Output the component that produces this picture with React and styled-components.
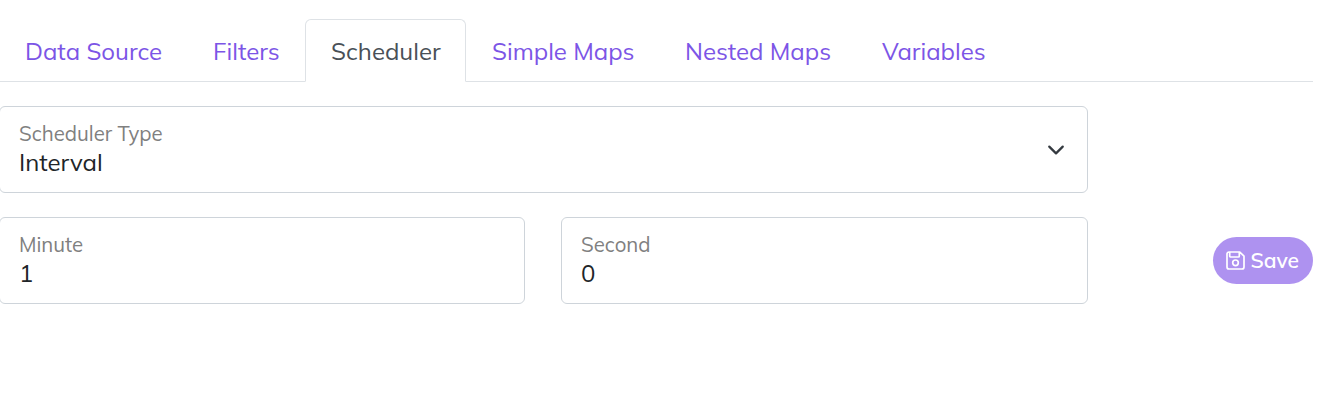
import React from "react";
import styled, { createGlobalStyle } from "styled-components";

const Global = createGlobalStyle`
  * { box-sizing: border-box; }
  body { margin: 0; background: #fff; overflow: hidden; font-family: Mulish, Muli, Lato, sans-serif; }
  button { font-family: inherit; }
`;
const Page = styled.main`
  width: 1313px;
  padding-top: 19px;
`;
const Tabs = styled.nav`
  display: flex;
  height: 63px;
  border-bottom: 1px solid #dee2e6;
`;
const Tab = styled.button`
  width: ${p => p.$w}px;
  height: 63px;
  padding: 0 0 0 25px;
  text-align: left;
  white-space: nowrap;
  font-size: 24px;
  font-weight: 400;
  line-height: 60px;
  color: ${p => (p.$active ? "#495057" : "#7c55e6")};
  background: ${p => (p.$active ? "#fff" : "transparent")};
  border: 1px solid ${p => (p.$active ? "#dee2e6" : "transparent")};
  border-bottom-color: ${p => (p.$active ? "#fff" : "transparent")};
  border-radius: 6px 6px 0 0;

  &:first-child { margin-left: -1px; }
`;
const Body = styled.section`
  display: flex;
  flex-direction: column;
  gap: 24px;
  padding-top: 24px;
`;
const Row = styled.div`
  display: flex;
  align-items: center;
`;
const Field = styled.div`
  display: flex;
  align-items: center;
  justify-content: space-between;
  width: ${p => p.$w}px;
  height: 87px;
  margin-left: ${p => p.$ml}px;
  padding: 0 22px 0 19px;
  border: 1px solid #ced4da;
  border-radius: 6px;
`;
const FieldText = styled.div`
  padding-bottom: 4px;
`;
const Caption = styled.div`
  font-size: 20.4px;
  line-height: 28px;
  color: #808080;
`;
const Value = styled.div`
  font-size: 24px;
  line-height: 30px;
  color: #212529;
`;
const Save = styled.button`
  display: flex;
  align-items: center;
  gap: 5.5px;
  width: 100px;
  height: 47px;
  margin-left: auto;
  padding: 0 0 0 13px;
  border: 0;
  border-radius: 24px;
  background: #ae92f0;
  color: #fff;
  font-size: 21px;
  font-weight: 600;
  line-height: 26px;
`;
const SaveLabel = styled.span`
  padding-bottom: 1px;
`;

const tabs = [
  ["Data Source", 188], ["Filters", 118], ["Scheduler", 161],
  ["Simple Maps", 193], ["Nested Maps", 197], ["Variables", 155],
];

function Input({ label, value, w, ml = -1, children }) {
  return (
    <Field $w={w} $ml={ml}>
      <FieldText>
        <Caption>{label}</Caption>
        <Value>{value}</Value>
      </FieldText>
      {children}
    </Field>
  );
}

export default function App() {
  return (
    <Page>
      <Global />
      <Tabs>
        {tabs.map(([t, w]) => (
          <Tab key={t} $w={w} $active={t === "Scheduler"}>{t}</Tab>
        ))}
      </Tabs>
      <Body>
        <Row>
          <Input label="Scheduler Type" value="Interval" w={1089}>
            <svg width="18" height="18" viewBox="0 0 16 16" fill="none" stroke="#343a40" strokeWidth="2" strokeLinecap="round" strokeLinejoin="round"><path d="m2 5 6 6 6-6" /></svg>
          </Input>
        </Row>
        <Row>
          <Input label="Minute" value="1" w={526} />
          <Input label="Second" value="0" w={527} ml={36} />
          <Save>
            <svg width="19" height="19" viewBox="0 0 19 19" fill="none" stroke="#fff" strokeWidth="1.7" strokeLinejoin="round"><path d="M1 3a2 2 0 0 1 2-2h10.8L18 5.2V16a2 2 0 0 1-2 2H3a2 2 0 0 1-2-2zM3.7 1v4a1 1 0 0 0 1 1h7.6a1 1 0 0 0 1-1V1" /><circle cx="9.5" cy="11.8" r="2.8" /></svg>
            <SaveLabel>Save</SaveLabel>
          </Save>
        </Row>
      </Body>
    </Page>
  );
}
